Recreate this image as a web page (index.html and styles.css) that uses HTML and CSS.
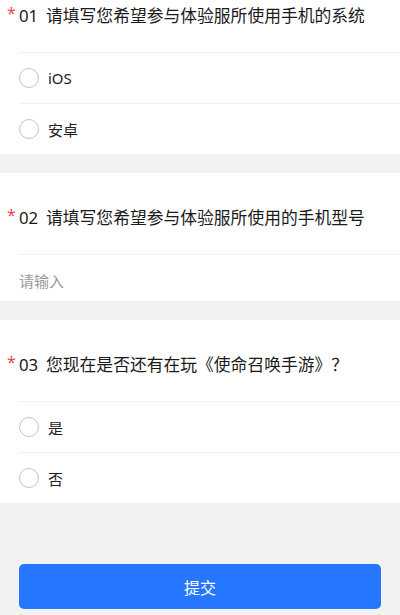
FILE: index.html
```html
<!DOCTYPE html>
<html lang="zh-CN">
<head>
    <meta charset="UTF-8">
    <meta name="viewport" content="width=device-width, initial-scale=1.0">
    <title>体验服招募问卷</title>
    <link rel="stylesheet" href="styles.css">
</head>
<body>
    <form class="survey">
        <div class="question">
            <div class="q-title"><span class="required">*</span><span class="q-num">01</span>请填写您希望参与体验服所使用手机的系统</div>
            <label class="option"><input type="radio" name="q1"><span class="radio"></span>iOS</label>
            <label class="option"><input type="radio" name="q1"><span class="radio"></span>安卓</label>
        </div>

        <div class="question">
            <div class="q-title"><span class="required">*</span><span class="q-num">02</span>请填写您希望参与体验服所使用的手机型号</div>
            <div class="field">
                <input type="text" class="text-input" placeholder="请输入">
            </div>
        </div>

        <div class="question">
            <div class="q-title"><span class="required">*</span><span class="q-num">03</span>您现在是否还有在玩《使命召唤手游》？</div>
            <label class="option"><input type="radio" name="q3"><span class="radio"></span>是</label>
            <label class="option"><input type="radio" name="q3"><span class="radio"></span>否</label>
        </div>

        <div class="actions">
            <button type="button" class="submit-btn">提交</button>
        </div>
    </form>
</body>
</html>
```

FILE: styles.css
```css
body {
    margin: 0;
    padding: 0;
    background-color: #f2f2f2;
    font-family: "Noto Sans", "Noto Sans CJK SC", sans-serif;
    color: #222;
}

/* page is scrolled a little, first card starts above the fold */
.survey {
    margin-top: -29px;
}

.question {
    background-color: #fff;
    margin-bottom: 19px;
}

.q-title {
    display: flex;
    align-items: center;
    padding: 33px 10px 24px 7px;
    font-size: 16.8px;
    line-height: 24px;
    color: #1a1a1a;
}

.required {
    width: 12px;
    color: #e8484f;
    font-size: 16px;
    line-height: 16px;
    align-self: flex-start;
    margin-top: 1px;
}

.q-num {
    width: 27px;
    flex-shrink: 0;
}

.option {
    display: flex;
    align-items: center;
    height: 50px;
    margin-left: 19px;
    border-top: 1px solid #f1f1f1;
    font-size: 15px;
    color: #222;
    cursor: pointer;
}

.option input {
    display: none;
}

.radio {
    width: 18px;
    height: 18px;
    border: 1px solid #c4c4c4;
    border-radius: 50%;
    margin-right: 9px;
    box-sizing: content-box;
}

.option input:checked + .radio {
    border-color: #2577ff;
    box-shadow: inset 0 0 0 5px #2577ff;
}

.field {
    margin-left: 19px;
    border-top: 1px solid #f1f1f1;
}

.text-input {
    display: block;
    width: 100%;
    height: 46px;
    padding: 6px 0 0 0;
    box-sizing: border-box;
    border: none;
    outline: none;
    font-family: inherit;
    font-size: 15px;
    color: #333;
    background: transparent;
}

.text-input::placeholder {
    color: #9a9a9a;
}

.actions {
    padding: 42px 19px 20px;
}

.submit-btn {
    display: block;
    width: 100%;
    height: 45px;
    border: none;
    border-radius: 5px;
    background-color: #2577ff;
    color: #fff;
    font-family: inherit;
    font-size: 16px;
    cursor: pointer;
}
```
